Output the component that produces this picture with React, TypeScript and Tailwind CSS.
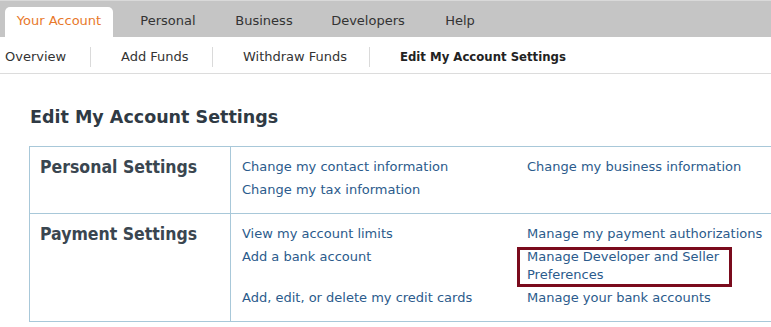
import React from 'react';

const tabs = [
  { label: 'Your Account', w: 'w-[108px]', active: true },
  { label: 'Personal', w: 'w-[80px]' },
  { label: 'Business', w: 'w-[82px]' },
  { label: 'Developers', w: 'w-[96px]' },
  { label: 'Help', w: 'w-[58px]' },
];

const subnav = [
  { label: 'Overview', w: 'w-[90px] pl-[5px]' },
  { label: 'Add Funds', w: 'w-[122px] pl-[30px] border-l' },
  { label: 'Withdraw Funds', w: 'w-[157px] pl-[30px] border-l' },
  { label: 'Edit My Account Settings', w: 'pl-[30px] border-l font-bold', current: true },
];

const condensed = { fontFamily: '"DejaVu Sans Condensed", "DejaVu Sans", Verdana, sans-serif' };

const Link = ({ children }: { children: React.ReactNode }) => (
  <a href="#" className="text-[#2b5b8c] leading-[18px] block">
    {children}
  </a>
);

const App = () => {
  return (
    <div
      className="w-[771px] h-[327px] overflow-hidden bg-white text-[13px] text-[#333]"
      style={{ fontFamily: '"DejaVu Sans", Verdana, sans-serif' }}
    >
      {/* top tabs */}
      <div className="h-[37px] bg-[#c5c5c5] border-t border-[#d9d9d9] flex items-end gap-[15px] pl-[5px]">
        {tabs.map((t) => (
          <div
            key={t.label}
            className={`${t.w} h-[30px] flex items-center justify-center ${
              t.active ? 'bg-white text-[#e8792b] rounded-t-[5px]' : 'text-[#333]'
            }`}
          >
            <span className="-mt-[3px]">{t.label}</span>
          </div>
        ))}
      </div>

      {/* sub navigation */}
      <div className="h-[37px] border-b border-[#dcdcdc] flex items-center pt-[3px]">
        {subnav.map((s) => (
          <div
            key={s.label}
            className={`${s.w} shrink-0 h-[20px] flex items-center border-[#dadada] ${
              s.current ? 'text-[#222]' : 'text-[#333]'
            }`}
            style={s.current ? condensed : undefined}
          >
            {s.label}
          </div>
        ))}
      </div>

      <div className="pl-[29px] pt-[32px]">
        <h1 className="text-[17.5px] font-bold text-[#2f3a44] leading-[22px] pl-[1px]">
          Edit My Account Settings
        </h1>

        <div className="mt-[18px] w-[800px] border-t border-l border-[#a8c8d9]">
          {/* personal */}
          <div className="flex border-b border-[#a8c8d9]">
            <div
              className="w-[201px] shrink-0 border-r border-[#a8c8d9] pl-[10px] pt-[10px] text-[17.5px] font-bold text-[#3a4650] leading-[20px]"
              style={condensed}
            >
              Personal Settings
            </div>
            <div className="grid grid-cols-[285px_1fr] gap-y-[5px] pl-[11px] pt-[11px] pb-[14px]">
              <Link>Change my contact information</Link>
              <Link>Change my business information</Link>
              <Link>Change my tax information</Link>
              <div />
            </div>
          </div>

          {/* payment */}
          <div className="flex border-b border-[#a8c8d9]">
            <div
              className="w-[201px] shrink-0 border-r border-[#a8c8d9] pl-[10px] pt-[10px] text-[17.5px] font-bold text-[#3a4650] leading-[20px]"
              style={condensed}
            >
              Payment Settings
            </div>
            <div className="grid grid-cols-[285px_1fr] gap-y-[5px] pl-[11px] pt-[11px] pb-[14px]">
              <Link>View my account limits</Link>
              <Link>Manage my payment authorizations</Link>
              <Link>Add a bank account</Link>
              <div className="relative w-[195px]">
                <Link>Manage Developer and Seller Preferences</Link>
                <span className="absolute -left-[10px] -top-[1px] w-[215px] h-[40px] border-[3px] border-[#7a0b1d] pointer-events-none" />
              </div>
              <Link>Add, edit, or delete my credit cards</Link>
              <Link>Manage your bank accounts</Link>
            </div>
          </div>
        </div>
      </div>
    </div>
  );
};

export default App;
